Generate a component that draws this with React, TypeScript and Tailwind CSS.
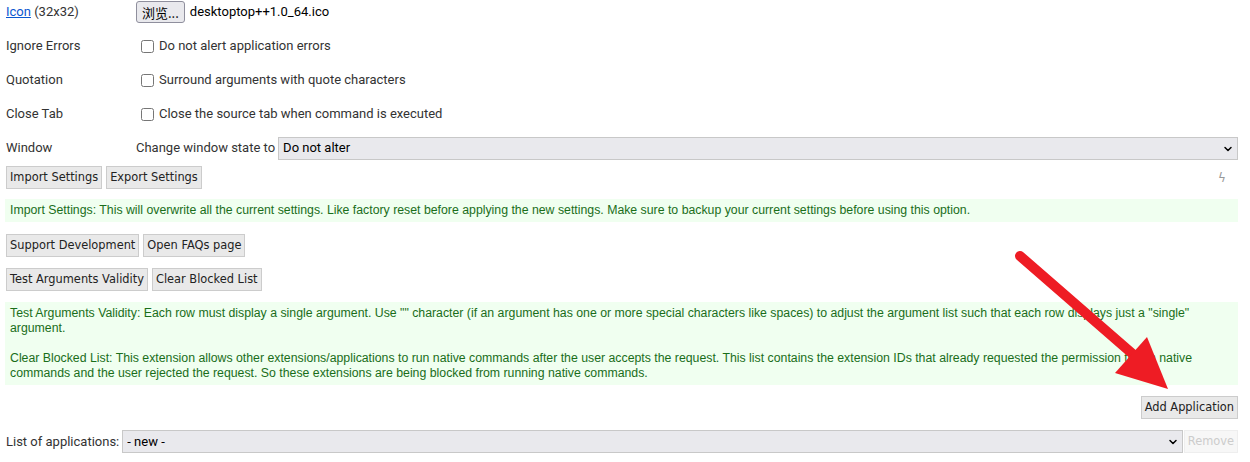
import { ChevronDown } from "lucide-react";

const LABEL = "font-['Roboto','Liberation_Sans',sans-serif] text-[13px] text-[#333]";
const BTN =
  "h-[23px] px-[3px] border border-[#ccc] bg-[#e9e9e9] text-[#222] text-[11.4px] font-['DejaVu_Sans','Liberation_Sans',sans-serif] leading-none";
const NOTE =
  "bg-[#f0fff0] text-[#1a6e1a] text-[12.3px] font-['Liberation_Sans',Arial,sans-serif] px-[5px] py-[4px] leading-[15px]";

function CheckRow({ label, text }: { label: string; text: string }) {
  return (
    <div className="flex items-center h-[34px]">
      <div className={`w-[130px] ${LABEL}`}>{label}</div>
      <label className={`flex items-center gap-[4px] ${LABEL}`}>
        <input type="checkbox" className="w-[13px] h-[13px] m-0 ml-[5px] mr-[1px]" />
        {text}
      </label>
    </div>
  );
}

function Select({ value, className }: { value: string; className?: string }) {
  return (
    <div className={`relative h-[23px] ${className ?? ""}`}>
      <select
        className="block appearance-none w-full h-full bg-[#e9e9ed] border border-[#c8c8c8] pl-[4px] text-[13px] text-black font-['Roboto','Liberation_Sans',sans-serif]"
        defaultValue={value}
      >
        <option>{value}</option>
      </select>
      <ChevronDown
        className="absolute right-[4px] top-[6px] w-[12px] h-[12px] text-black pointer-events-none"
        strokeWidth={3}
      />
    </div>
  );
}

export default function App() {
  return (
    <div className="relative w-[1250px] h-[462px] bg-white overflow-hidden">
      <div className="w-[1233px] ml-[5px]">
        {/* icon row */}
        <div className="flex items-center h-[24px] pl-[1px]">
          <div className={`w-[130px] ${LABEL}`}>
            <a href="#" className="text-[#0b57d0] underline">Icon</a> (32x32)
          </div>
          <button className="h-[22px] px-[5px] border border-[#8f8f9d] rounded-[3px] bg-[#e9e9ed] text-[13px] text-black font-['Noto_Sans_CJK_SC',sans-serif] leading-none">
            浏览...
          </button>
          <span className={`ml-[5px] ${LABEL} text-black`}>desktoptop++1.0_64.ico</span>
        </div>

        <div className="pl-[1px] mt-[5px]">
          <CheckRow label="Ignore Errors" text="Do not alert application errors" />
          <CheckRow label="Quotation" text="Surround arguments with quote characters" />
          <CheckRow label="Close Tab" text="Close the source tab when command is executed" />
          <div className="flex items-center h-[34px]">
            <div className={`w-[130px] ${LABEL}`}>Window</div>
            <span className={`${LABEL} mr-[3px]`}>Change window state to</span>
            <Select value="Do not alter" className="flex-1" />
          </div>
        </div>

        <div className="flex items-center gap-[4px] pl-[1px] mt-[1px]">
          <button className={BTN}>Import Settings</button>
          <button className={BTN}>Export Settings</button>
          <span className="ml-auto mr-[12px] text-[12px] text-[#999] font-['DejaVu_Sans',sans-serif]">ϟ</span>
        </div>

        <div className={`${NOTE} mt-[10px]`}>
          Import Settings: This will overwrite all the current settings. Like factory reset before applying the new
          settings. Make sure to backup your current settings before using this option.
        </div>

        <div className="flex gap-[4px] pl-[1px] mt-[12px]">
          <button className={BTN}>Support Development</button>
          <button className={BTN}>Open FAQs page</button>
        </div>
        <div className="flex gap-[4px] pl-[1px] mt-[11px]">
          <button className={BTN}>Test Arguments Validity</button>
          <button className={BTN}>Clear Blocked List</button>
        </div>

        <div className={`${NOTE} mt-[11px]`}>
          <p>
            Test Arguments Validity: Each row must display a single argument. Use "" character (if an argument has one or
            more special characters like spaces) to adjust the argument list such that each row displays just a "single"
            argument.
          </p>
          <p className="mt-[15px]">
            Clear Blocked List: This extension allows other extensions/applications to run native commands after the user
            accepts the request. This list contains the extension IDs that already requested the permission to run native
            commands and the user rejected the request. So these extensions are being blocked from running native commands.
          </p>
        </div>

        <div className="flex justify-end mt-[11px]">
          <button className={BTN}>Add Application</button>
        </div>

        <div className="flex items-center mt-[11px]">
          <span className={`${LABEL} pl-[1px] mr-[3px]`}>List of applications:</span>
          <Select value="- new -" className="flex-1" />
          <button disabled className={`${BTN} ml-[1px] bg-[#f7f7f7] border-[#eee] text-[#ccc]`}>
            Remove
          </button>
        </div>
      </div>

      {/* red annotation arrow */}
      <svg className="absolute left-0 top-0 pointer-events-none" width="1250" height="462">
        <line x1="1020" y1="256" x2="1135" y2="356" stroke="#ee1c24" strokeWidth="10" strokeLinecap="round" />
        <polygon points="1147,337 1168,389 1115,373" fill="#ee1c24" />
      </svg>
    </div>
  );
}
